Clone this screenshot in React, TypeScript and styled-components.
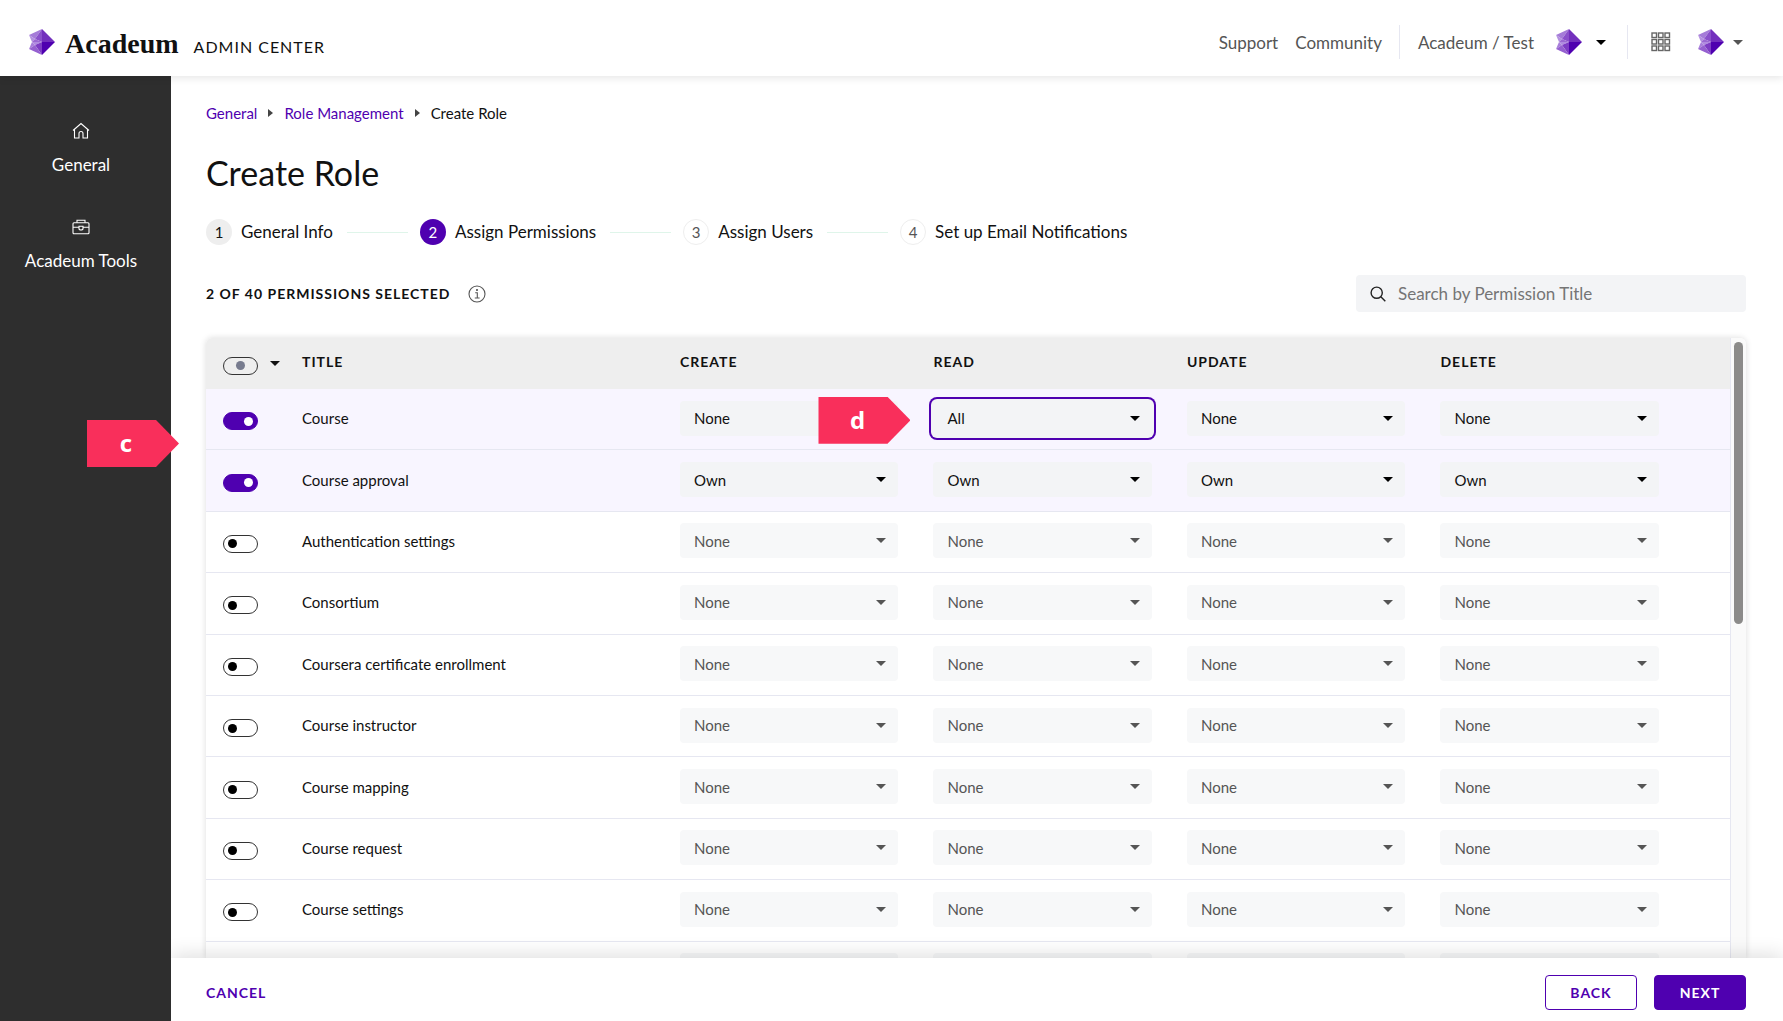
import React, { useState } from "react";
import styled, { createGlobalStyle, css } from "styled-components";

const purple = "#4f00b0";
const ink = "#111111";
const grey = "#555555";
const field = "#f3f4f6";
const line = "#e6e7f1";

const GlobalStyle = createGlobalStyle`
  *, *::before, *::after { box-sizing: border-box; }
  body {
    margin: 0;
    background: #fff;
    color: ${ink};
    font-family: Lato, "Liberation Sans", sans-serif;
    font-size: 15px;
  }
  button, input, select { font: inherit; color: inherit; }
  a { text-decoration: none; }
`;

const Page = styled.div`
  display: flex;
  flex-direction: column;
  height: 100vh;
  overflow: hidden;
`;

const Header = styled.header`
  display: flex;
  align-items: center;
  justify-content: space-between;
  flex: none;
  height: 76px;
  padding: 8px 40px 0 29px;
  box-shadow: 0 2px 8px rgba(0, 0, 0, 0.1);
  position: relative;
  z-index: 2;
  background: #fff;
`;

const Brand = styled.a`
  display: flex;
  align-items: center;
  color: ${ink};
`;

const BrandText = styled.span`
  display: flex;
  align-items: baseline;
  gap: 15px;
  margin-left: 10px;
  padding-top: 3px;
`;

const BrandName = styled.span`
  font-family: "Liberation Serif", serif;
  font-weight: 700;
  font-size: 28px;
  line-height: 32px;
`;

const BrandProduct = styled.span`
  font-size: 16px;
  letter-spacing: 1px;
`;

const Nav = styled.nav`
  display: flex;
  align-items: center;
  height: 34px;
  font-size: 17px;
  color: ${grey};
`;

const NavLink = styled.a`
  color: ${grey};
  margin-right: 17px;
`;

const NavGroup = styled.div<{ $gap: number }>`
  display: flex;
  align-items: center;
  height: 34px;
  gap: ${(p) => p.$gap}px;
  padding: 0 21px 0 18px;
  border-left: 1px solid ${line};
  &:last-child { padding: 0 0 0 23px; }
`;

const IconButton = styled.button<{ $dark?: boolean }>`
  display: flex;
  align-items: center;
  gap: ${(p) => (p.$dark ? 14 : 9)}px;
  padding: 0;
  border: 0;
  background: none;
  color: ${(p) => (p.$dark ? "#000" : grey)};
  cursor: pointer;
`;

const Body = styled.div`
  display: flex;
  flex: 1;
  min-height: 0;
  position: relative;
`;

const Sidebar = styled.aside`
  display: flex;
  flex-direction: column;
  gap: 41px;
  flex: none;
  width: 171px;
  padding: 46px 9px 0 0;
  background: #2e2e2e;
`;

const SideLink = styled.a`
  display: flex;
  flex-direction: column;
  align-items: center;
  gap: 13px;
  color: #fff;
  font-size: 17px;
  line-height: 24px;
`;

const Main = styled.main`
  display: flex;
  flex-direction: column;
  flex: 1;
  min-width: 0;
`;

const Content = styled.div`
  display: flex;
  flex-direction: column;
  flex: 1;
  min-height: 0;
  padding: 25px 37px 0 35px;
`;

const Crumbs = styled.nav`
  display: flex;
  align-items: center;
  gap: 11px;
  line-height: 24px;
  a { color: ${purple}; }
`;

const Title = styled.h1`
  margin: 26px 0 0;
  font-size: 34px;
  line-height: 44px;
  font-weight: 400;
`;

const Steps = styled.ol`
  display: flex;
  align-items: center;
  margin: 24px 0 0;
  padding: 0;
  list-style: none;
  font-size: 17px;
  line-height: 26px;
`;

const Step = styled.li`
  display: flex;
  align-items: center;
  gap: 9px;
  &:not(:last-child)::after {
    content: "";
    width: 61px;
    height: 1px;
    margin: 0 12px 0 5px;
    background: #dff5ea;
  }
`;

const StepNumber = styled.span<{ $state: "done" | "current" | "next" }>`
  display: flex;
  align-items: center;
  justify-content: center;
  width: 26px;
  height: 26px;
  border-radius: 50%;
  font-size: 15px;
  ${(p) => p.$state === "done" && css`background: #eeeeee;`}
  ${(p) => p.$state === "current" && css`background: ${purple}; color: #fff;`}
  ${(p) => p.$state === "next" && css`border: 1px solid #eeeeee; color: ${grey};`}
`;

const Toolbar = styled.div`
  display: flex;
  align-items: center;
  justify-content: space-between;
  margin-top: 30px;
`;

const Count = styled.div`
  display: flex;
  align-items: center;
  gap: 18px;
  font-size: 14px;
  font-weight: 700;
  letter-spacing: 1px;
`;

const Search = styled.label`
  display: flex;
  align-items: center;
  gap: 12px;
  width: 390px;
  height: 37px;
  padding: 0 14px;
  border-radius: 4px;
  background: ${field};
  input {
    flex: 1;
    min-width: 0;
    padding: 0;
    border: 0;
    outline: 0;
    background: none;
    font-size: 17px;
  }
  input::placeholder { color: #757575; opacity: 1; }
`;

const Card = styled.section`
  display: flex;
  flex: 1;
  min-height: 0;
  margin-top: 26px;
  border-radius: 6px 6px 0 0;
  box-shadow: 0 0 6px rgba(0, 0, 0, 0.14);
  overflow: hidden;
`;

const TableArea = styled.div`
  flex: 1;
  min-width: 0;
  overflow: hidden;
  border-right: 1px solid ${line};
`;

const ScrollTrack = styled.div`
  flex: none;
  width: 15px;
  padding: 4px 3px;
  background: #fafafa;
`;

const ScrollThumb = styled.div`
  width: 9px;
  height: 46%;
  border-radius: 5px;
  background: #8c8b8a;
`;

const Table = styled.table`
  width: 100%;
  height: 665px;
  table-layout: fixed;
  border-collapse: separate;
  border-spacing: 0;
  th, td { padding: 0 35px 0 0; text-align: left; }
  th:first-child, td:first-child { width: 96px; padding: 4px 0 0 17px; }
  th:nth-child(2) { width: 378px; }
  th:last-child { width: 19%; }
  th:last-child, td:last-child { padding-right: 71px; }
  th {
    height: 51px;
    padding-bottom: 4px;
    background: #eeeeee;
    font-size: 14px;
    letter-spacing: 1px;
  }
`;

const Row = styled.tr<{ $selected: boolean }>`
  background: ${(p) => (p.$selected ? "#f8f5ff" : "#fff")};
  td { height: 61px; padding-bottom: 2px; border-bottom: 1px solid ${line}; }
`;

const ToggleAll = styled.div`
  display: flex;
  align-items: center;
  gap: 12px;
  svg { margin-bottom: 5px; }
`;

const Toggle = styled.input.attrs({ type: "checkbox" })<{ $mixed?: boolean }>`
  appearance: none;
  display: flex;
  align-items: center;
  width: 35px;
  height: 18px;
  margin: 0;
  padding: 0 4px;
  border: 1px solid #333;
  border-radius: 9px;
  background: ${(p) => (p.$mixed ? "transparent" : "#fff")};
  justify-content: ${(p) => (p.$mixed ? "center" : "flex-start")};
  &::before {
    content: "";
    width: 9px;
    height: 9px;
    border-radius: 50%;
    background: ${(p) => (p.$mixed ? "#777b8e" : "#000")};
  }
  &:checked {
    justify-content: flex-end;
    border-color: ${purple};
    background: ${purple};
  }
  &:checked::before { background: #fff; }
`;

const SelectBox = styled.div<{ $muted: boolean; $active: boolean }>`
  position: relative;
  color: ${(p) => (p.$muted ? grey : "#000")};
  select {
    appearance: none;
    display: block;
    width: 100%;
    height: 35px;
    padding: 0 30px 0 14px;
    border: 0;
    border-radius: 4px;
    outline: 0;
    opacity: 1;
    color: ${(p) => (p.$muted ? grey : ink)};
    background: ${(p) => (p.$muted ? "#f7f8f9" : field)};
    box-shadow: ${(p) => (p.$active ? `0 0 0 2px ${field}, 0 0 0 4px ${purple}` : "none")};
  }
  > svg {
    position: absolute;
    right: 12px;
    top: 15px;
    pointer-events: none;
  }
`;

const Marker = styled.div<{ $over: "page" | "cell" }>`
  position: absolute;
  z-index: 3;
  width: 92px;
  height: 47px;
  padding-right: 14px;
  background: #f92f5b;
  clip-path: polygon(0 0, 75% 0, 100% 50%, 75% 100%, 0 100%);
  color: #fff;
  font-family: "Open Sans", sans-serif;
  font-size: 24px;
  font-weight: 700;
  line-height: 46px;
  text-align: center;
  ${(p) =>
    p.$over === "page"
      ? css`left: 87px; top: 344px;`
      : css`right: -12px; top: -4px;`}
`;

const Footer = styled.footer`
  display: flex;
  align-items: center;
  gap: 17px;
  flex: none;
  height: 63px;
  padding: 6px 37px 0 35px;
  background: #fff;
  box-shadow: 0 -4px 18px rgba(0, 0, 0, 0.12);
  position: relative;
  clip-path: inset(-30px 0 0 0);
`;

const Button = styled.button<{ $kind: "text" | "outline" | "solid" }>`
  height: 35px;
  min-width: 92px;
  padding: 0;
  border: 1px solid ${purple};
  border-radius: 4px;
  background: #fff;
  color: ${purple};
  font-size: 14px;
  font-weight: 700;
  letter-spacing: 1px;
  cursor: pointer;
  ${(p) => p.$kind === "solid" && css`background: ${purple}; color: #fff;`}
  ${(p) =>
    p.$kind === "text" &&
    css`
      min-width: 0;
      margin-right: auto;
      border: 0;
    `}
`;

const Gem = () => (
  <svg width="26" height="26" viewBox="0 0 26 26" aria-hidden="true">
    <path d="M13 0 26 13H13Z" fill="#7330bd" />
    <path d="M13 26 26 13H13Z" fill="#4f00b0" />
    <path d="M13 0 0 6 6 10Z" fill="#a57bd8" />
    <path d="M13 0V13L6 10Z" fill="#8a50cb" />
    <path d="M0 6 6 10 3 13Z" fill="#b390e0" />
    <path d="M6 10 13 13H3Z" fill="#9a68d2" />
    <path d="M3 13H13L6 16Z" fill="#b08be0" />
    <path d="M3 13 6 16 0 20Z" fill="#a87edb" />
    <path d="M13 13 6 16 13 26Z" fill="#7d3cc4" />
    <path d="M6 16 0 20 13 26Z" fill="#9560d0" />
  </svg>
);

const Caret = () => (
  <svg width="10" height="5" viewBox="0 0 10 5" aria-hidden="true">
    <path d="M0 0H10L5 5Z" fill="currentColor" />
  </svg>
);

const CrumbArrow = () => (
  <svg width="5" height="8" viewBox="0 0 5 8" aria-hidden="true">
    <path d="M0 0 5 4 0 8Z" fill="#444" />
  </svg>
);

const AppsIcon = () => (
  <svg width="20" height="20" viewBox="0 0 20 20" fill="none" stroke="#666" strokeWidth="1.4" aria-hidden="true">
    {[1, 7.5, 14].map((y) =>
      [1, 7.5, 14].map((x) => <rect key={`${x}-${y}`} x={x} y={y} width="4.5" height="4.5" />)
    )}
  </svg>
);

const HomeIcon = () => (
  <svg width="18" height="18" viewBox="0 0 18 18" fill="none" stroke="#fff" strokeWidth="1.1" aria-hidden="true">
    <path d="M1 8.5 9 1.5 17 8.5M2.5 7.5V16H7V11.5Q7 9.5 9 9.5T11 11.5V16H15.5V7.5" />
  </svg>
);

const ToolboxIcon = () => (
  <svg width="18" height="18" viewBox="0 0 18 18" fill="none" stroke="#fff" strokeWidth="1.1" aria-hidden="true">
    <rect x="1" y="4.8" width="16" height="11" rx="1" />
    <path d="M5 4.8V2.3H13V4.8M1 9.2H7M11 9.2H17M7 8.2H11V11Q9 13 7 11Z" />
  </svg>
);

const InfoIcon = () => (
  <svg width="18" height="18" viewBox="0 0 18 18" fill="none" stroke="#555" strokeWidth="1.1" aria-hidden="true">
    <circle cx="9" cy="9" r="8" />
    <path d="M7.2 7.8H9.3V13M6.8 13H11.6" />
    <circle cx="9" cy="5" r="0.5" fill="#555" />
  </svg>
);

const SearchIcon = () => (
  <svg width="16" height="16" viewBox="0 0 16 16" fill="none" stroke="#222" strokeWidth="1.4" aria-hidden="true">
    <circle cx="6.7" cy="6.7" r="5.6" />
    <path d="M10.8 10.8 15.3 15.3" />
  </svg>
);

type Step = { label: string; state: "done" | "current" | "next" };
const steps: Step[] = [
  { label: "General Info", state: "done" },
  { label: "Assign Permissions", state: "current" },
  { label: "Assign Users", state: "next" },
  { label: "Set up Email Notifications", state: "next" },
];

const actions = ["Create", "Read", "Update", "Delete"];

type Permission = { title: string; on: boolean; values: string[] };
const off = (title: string): Permission => ({ title, on: false, values: ["None", "None", "None", "None"] });
const initial: Permission[] = [
  { title: "Course", on: true, values: ["None", "All", "None", "None"] },
  { title: "Course approval", on: true, values: ["Own", "Own", "Own", "Own"] },
  off("Authentication settings"),
  off("Consortium"),
  off("Coursera certificate enrollment"),
  off("Course instructor"),
  off("Course mapping"),
  off("Course request"),
  off("Course settings"),
  off(""),
];

export default function App() {
  const [rows, setRows] = useState(initial);
  const update = (index: number, change: Partial<Permission>) =>
    setRows(rows.map((row, i) => (i === index ? { ...row, ...change } : row)));

  return (
    <Page>
      <GlobalStyle />
      <Header>
        <Brand href="#">
          <Gem />
          <BrandText>
            <BrandName>Acadeum</BrandName>
            <BrandProduct>ADMIN CENTER</BrandProduct>
          </BrandText>
        </Brand>
        <Nav>
          <NavLink href="#">Support</NavLink>
          <NavLink href="#">Community</NavLink>
          <NavGroup $gap={22}>
            <span>Acadeum / Test</span>
            <IconButton $dark aria-label="Switch institution">
              <Gem />
              <Caret />
            </IconButton>
          </NavGroup>
          <NavGroup $gap={27}>
            <IconButton aria-label="Apps">
              <AppsIcon />
            </IconButton>
            <IconButton aria-label="Account">
              <Gem />
              <Caret />
            </IconButton>
          </NavGroup>
        </Nav>
      </Header>
      <Body>
        <Sidebar>
          <SideLink href="#">
            <HomeIcon />
            General
          </SideLink>
          <SideLink href="#">
            <ToolboxIcon />
            Acadeum Tools
          </SideLink>
        </Sidebar>
        <Main>
          <Content>
            <Crumbs aria-label="Breadcrumb">
              <a href="#">General</a>
              <CrumbArrow />
              <a href="#">Role Management</a>
              <CrumbArrow />
              <span>Create Role</span>
            </Crumbs>
            <Title>Create Role</Title>
            <Steps>
              {steps.map((step, i) => (
                <Step key={step.label}>
                  <StepNumber $state={step.state}>{i + 1}</StepNumber>
                  {step.label}
                </Step>
              ))}
            </Steps>
            <Toolbar>
              <Count>
                2 OF 40 PERMISSIONS SELECTED
                <InfoIcon />
              </Count>
              <Search>
                <SearchIcon />
                <input type="search" placeholder="Search by Permission Title" aria-label="Search by Permission Title" />
              </Search>
            </Toolbar>
            <Card>
              <TableArea>
                <Table>
                  <thead>
                    <tr>
                      <th>
                        <ToggleAll>
                          <Toggle $mixed aria-label="Select all" />
                          <Caret />
                        </ToggleAll>
                      </th>
                      <th>TITLE</th>
                      {actions.map((action) => (
                        <th key={action}>{action.toUpperCase()}</th>
                      ))}
                    </tr>
                  </thead>
                  <tbody>
                    {rows.map((row, i) => (
                      <Row key={i} $selected={row.on}>
                        <td>
                          <Toggle
                            id={`permission-${i}`}
                            aria-label={`Enable ${row.title}`}
                            checked={row.on}
                            onChange={(e) => update(i, { on: e.target.checked })}
                          />
                        </td>
                        <td>
                          <label htmlFor={`permission-${i}`}>{row.title}</label>
                        </td>
                        {row.values.map((value, j) => (
                          <td key={actions[j]}>
                            <SelectBox $muted={!row.on} $active={value === "All"}>
                              <select
                                aria-label={`${actions[j]} ${row.title}`}
                                value={value}
                                disabled={!row.on}
                                onChange={(e) =>
                                  update(i, { values: row.values.map((v, k) => (k === j ? e.target.value : v)) })
                                }
                              >
                                <option>None</option>
                                <option>Own</option>
                                <option>All</option>
                              </select>
                              <Caret />
                              {i === 0 && j === 0 && <Marker $over="cell">d</Marker>}
                            </SelectBox>
                          </td>
                        ))}
                      </Row>
                    ))}
                  </tbody>
                </Table>
              </TableArea>
              <ScrollTrack>
                <ScrollThumb />
              </ScrollTrack>
            </Card>
          </Content>
          <Footer>
            <Button $kind="text">CANCEL</Button>
            <Button $kind="outline">BACK</Button>
            <Button $kind="solid">NEXT</Button>
          </Footer>
        </Main>
        <Marker $over="page">c</Marker>
      </Body>
    </Page>
  );
}
